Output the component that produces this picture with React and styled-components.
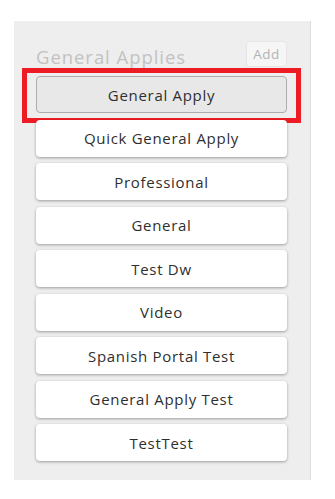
import styled, { createGlobalStyle } from "styled-components";

const GlobalStyle = createGlobalStyle`
  body {
    margin: 0;
    background: #ffffff;
    font-family: "Open Sans", "Noto Sans", sans-serif;
  }
`;

const Panel = styled.div`
  margin: 21px 0 0 14px;
  width: 297px;
  height: 459px;
  box-sizing: border-box;
  padding: 21px 23px 0 22px;
  background: #eeeeee;
  border-right: 1px solid #dcdcdc;
`;

const Header = styled.div`
  display: flex;
  justify-content: space-between;
  align-items: flex-end;
  height: 24px;
  margin-bottom: 10px;
`;

const Title = styled.h2`
  margin: 0 0 -3px 0;
  font-size: 18.5px;
  font-weight: 400;
  line-height: 24px;
  color: #c2c2c2;
  letter-spacing: 0.95px;
`;

const AddButton = styled.button`
  align-self: flex-start;
  height: 24px;
  width: 39px;
  padding: 0;
  margin-right: 1px;
  border: none;
  border-radius: 3px;
  background: #f6f6f6;
  box-shadow: 0 0 2px rgba(0, 0, 0, 0.12);
  font-family: inherit;
  font-size: 13.5px;
  letter-spacing: 0.4px;
  color: #b3b3b3;
`;

const List = styled.div`
  display: flex;
  flex-direction: column;
  gap: 6.5px;
`;

const Item = styled.div`
  position: relative;
  box-sizing: border-box;
  height: 37px;
  display: flex;
  align-items: center;
  justify-content: center;
  border-radius: 4px;
  font-size: 15px;
  letter-spacing: 0.7px;
  color: #2f2f2f;
  background: ${(p) => (p.$active ? "#e8e8e8" : "#ffffff")};
  border: ${(p) => (p.$active ? "1px solid #adadad" : "none")};
  box-shadow: ${(p) =>
    p.$active ? "none" : "0 1px 3px rgba(0, 0, 0, 0.35)"};
`;

const Highlight = styled.span`
  position: absolute;
  top: -9px;
  bottom: -11px;
  left: -15px;
  right: -15px;
  border: 5px solid #ed1c24;
  pointer-events: none;
`;

const applies = [
  "General Apply",
  "Quick General Apply",
  "Professional",
  "General",
  "Test Dw",
  "Video",
  "Spanish Portal Test",
  "General Apply Test",
  "TestTest",
];

const App = () => {
  return (
    <>
      <GlobalStyle />
      <Panel>
        <Header>
          <Title>General Applies</Title>
          <AddButton>Add</AddButton>
        </Header>
        <List>
          {applies.map((name, index) => (
            <Item key={`${name}-${index}`} $active={index === 0}>
              {name}
              {index === 0 && <Highlight />}
            </Item>
          ))}
        </List>
      </Panel>
    </>
  );
};

export default App;
